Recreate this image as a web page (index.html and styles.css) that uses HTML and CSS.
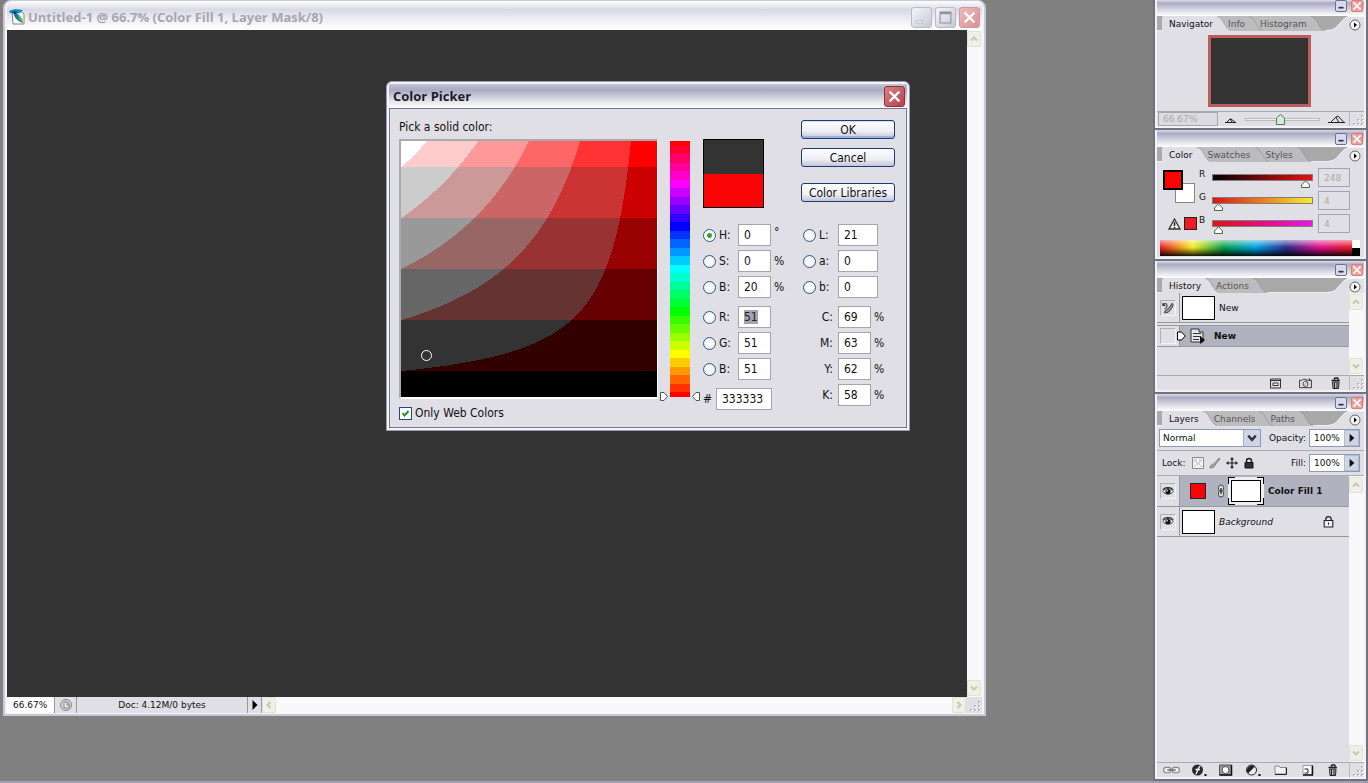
FILE: index.html
```html
<!DOCTYPE html>
<html lang="en">
<head>
<meta charset="utf-8">
<title>Untitled-1</title>
<link rel="stylesheet" href="styles.css">
</head>
<body>
<svg class="defs" aria-hidden="true">
  <symbol id="min" viewBox="0 0 12 12"><path d="M3 7h6v2H3z" fill="currentColor"/></symbol>
  <symbol id="x" viewBox="0 0 12 12"><path d="M1.500 1.500l9 9M10.500 1.500l-9 9" stroke="#fff" stroke-width="2"/></symbol>
  <symbol id="max" viewBox="0 0 12 12"><path d="M1 1h10v10H1z" fill="none" stroke="#90909c"/><path d="M1 2h10" stroke="#90909c" stroke-width="2"/></symbol>
  <symbol id="up" viewBox="0 0 10 10"><path d="M2 6.500l3-3 3 3" fill="none" stroke="#c5c7b8" stroke-width="2"/></symbol>
  <symbol id="down" viewBox="0 0 10 10"><path d="M2 3.500l3 3 3-3" fill="none" stroke="#c5c7b8" stroke-width="2"/></symbol>
  <symbol id="tail" viewBox="0 0 20 15"><path d="M0 0H4C11 1 11 14 20 15H0Z" fill="currentColor"/><path d="M4 .5C11 1 11 13 18 14.500" fill="none" stroke="#777" stroke-opacity=".45"/></symbol>
  <symbol id="fly" viewBox="0 0 36 15"><path d="M0 15C12 14 12 1 22 0H36V15Z" fill="#e0dfe5"/><path d="M0 14.500C12 14 12 1 22 .5H36" fill="none" stroke="#f6f6f8"/><circle cx="27" cy="9" r="5" fill="#f4f4f6" stroke="#666"/><path d="M26 6.500v5l3-2.500z" fill="#000"/></symbol>
  <symbol id="grip" viewBox="0 0 14 14"><path d="M11 3h2v2h-2zM7 7h2v2H7zM11 7h2v2h-2zM3 11h2v2H3zM7 11h2v2H7zM11 11h2v2h-2z" fill="#b3b1b8"/><path d="M12 4h2v1h-2zM8 8h2v1H8zM12 8h2v1h-2zM4 12h2v1H4zM8 12h2v1H8zM12 12h2v1h-2z" fill="#fff"/></symbol>
  <symbol id="trash" viewBox="0 0 12 12"><path d="M2 3.500h8.500M4.500 2.500L5.500 1H8l1 1.500" fill="none" stroke="#222" stroke-width="1.500"/><path d="M3 5h6.500L9 11.500H3.500z" fill="#bbb" stroke="#222"/><path d="M5 5.500v5.500M7.500 5.500v5.500" stroke="#222"/></symbol>
  <symbol id="eye" viewBox="0 0 16 14"><path d="M2 7C5 2.500 11 2.500 14 7C11 11 5 11 2 7Z" fill="#fff" stroke="#222"/><circle cx="8" cy="7" r="3" fill="#111"/><circle cx="7" cy="6" r="1" fill="#ccc"/><path d="M2 5C5 1.500 11 1.500 14 5" fill="none" stroke="#222" stroke-width="1.300"/></symbol>
  <symbol id="rarr" viewBox="0 0 10 10"><path d="M3 1.500l4 3.500-4 3.500z" fill="#111"/></symbol>
</svg>

<div class="desktop">
  <main class="doc">
    <header class="doc-title">
      <svg class="app-icon" viewBox="0 0 16 16"><path d="M3 2h9l3 3v10H4z" fill="#f5f8f8" stroke="#888"/><path d="M0 2L6 0l8 1-3 3-5 1-5-1z" fill="#1889bd"/><path d="M4 3c4 0 7 4 10 11-6-2-9-6-10-11z" fill="#1c76a8"/><path d="M9 5c3 2 5 5 5 9-3-2-5-5-5-9z" fill="#6bb54a"/><path d="M3 2l5 1-2 2z" fill="#0a2f4d"/></svg>
      <h1>Untitled-1 @ 66.7% (Color Fill 1, Layer Mask/8)</h1>
      <button class="wbtn" aria-label="Minimize"><svg viewBox="0 0 12 12"><path d="M1 9h6v2H1z" fill="#fff" stroke="#a0a0aa" stroke-width=".6"/></svg></button>
      <button class="wbtn" aria-label="Maximize"><svg><use href="#max"/></svg></button>
      <button class="wbtn wclose pale" aria-label="Close"><svg><use href="#x"/></svg></button>
    </header>
    <div class="doc-view">
      <div class="artboard"></div>
      <div class="vscroll"><button aria-label="Scroll up"><svg><use href="#up"/></svg></button><button aria-label="Scroll down"><svg><use href="#down"/></svg></button></div>
    </div>
    <footer class="doc-status">
      <input class="doc-zoom" aria-label="Zoom" value="66.67%">
      <span class="status-icon"><svg viewBox="0 0 14 14"><circle cx="7" cy="7" r="5.500" fill="#d0d0d4" stroke="#888"/><path d="M5 4v6h5V6L8 4z" fill="#e8e8ea" stroke="#888"/><path d="M8 4v3h3" fill="none" stroke="#888"/></svg></span>
      <span class="doc-info">Doc: 4.12M/0 bytes</span>
      <button class="doc-more" aria-label="Status menu"><svg viewBox="0 0 10 10"><path d="M2.500 0v10l5-5z" fill="#000"/></svg></button>
      <div class="hscroll"><button aria-label="Scroll left"><svg class="rot-r"><use href="#down"/></svg></button><button aria-label="Scroll right"><svg class="rot-l"><use href="#down"/></svg></button></div>
      <svg class="grip"><use href="#grip"/></svg>
    </footer>
  </main>

  <aside class="dock">
    <section class="palette nav">
      <div class="bar bar-short"><button class="pmin" aria-label="Minimize"><svg><use href="#min"/></svg></button><button class="pclose" aria-label="Close"><svg><use href="#x"/></svg></button></div>
      <div class="tabs"><button class="tab on">Navigator<svg><use href="#tail"/></svg></button><button class="tab">Info<svg><use href="#tail"/></svg></button><button class="tab">Histogram<svg><use href="#tail"/></svg></button><button class="fly" aria-label="Palette menu"><svg><use href="#fly"/></svg></button></div>
      <div class="nav-body"><div class="thumb"></div></div>
      <div class="nav-foot">
        <input class="nav-zoom" aria-label="Zoom" value="66.67%">
        <svg class="hill-s" viewBox="0 0 12 8"><path d="M0 7.500H11M2 7L5 4l2 3M5 4l1 0 4 3" fill="none" stroke="#222"/></svg>
        <input type="range" class="zoomer" aria-label="Zoom slider" min="0" max="100" value="47">
        <svg class="hill-l" viewBox="0 0 18 8"><path d="M0 7.500H17M3 7l5-5 2.500 5M8 2l2-1 5.500 6" fill="none" stroke="#222"/></svg>
        <svg class="grip edge"><use href="#grip"/></svg>
      </div>
    </section>

    <section class="palette color">
      <div class="bar"><button class="pmin" aria-label="Minimize"><svg><use href="#min"/></svg></button><button class="pclose" aria-label="Close"><svg><use href="#x"/></svg></button></div>
      <div class="tabs"><button class="tab on">Color<svg><use href="#tail"/></svg></button><button class="tab">Swatches<svg><use href="#tail"/></svg></button><button class="tab">Styles<svg><use href="#tail"/></svg></button><button class="fly" aria-label="Palette menu"><svg><use href="#fly"/></svg></button></div>
      <div class="color-body">
        <div class="chips">
          <div class="fgbg"><button class="bgc" aria-label="Background color"></button><button class="fgc" aria-label="Foreground color"></button></div>
          <div class="gamut"><svg viewBox="0 0 13 12"><path d="M6.500 1L12 11H1z" fill="#f2f2f2" stroke="#333" stroke-width="1.300"/><path d="M6.500 4v4M6.500 9v1.300" stroke="#222" stroke-width="1.500"/></svg><button class="safe" aria-label="Printable color"></button></div>
        </div>
        <div class="channels">
          <label for="cr">R</label><input type="range" id="cr" class="ch ch-r" max="255" value="248"><input class="dim" aria-label="Red value" value="248">
          <label for="cg">G</label><input type="range" id="cg" class="ch ch-g" max="255" value="4"><input class="dim" aria-label="Green value" value="4">
          <label for="cb">B</label><input type="range" id="cb" class="ch ch-b" max="255" value="4"><input class="dim" aria-label="Blue value" value="4">
        </div>
      </div>
      <div class="spectrum"><div class="ramp"></div><div class="bw"></div></div>
    </section>

    <section class="palette history">
      <div class="bar"><button class="pmin" aria-label="Minimize"><svg><use href="#min"/></svg></button><button class="pclose" aria-label="Close"><svg><use href="#x"/></svg></button></div>
      <div class="tabs"><button class="tab on">History<svg><use href="#tail"/></svg></button><button class="tab">Actions<svg><use href="#tail"/></svg></button><button class="fly" aria-label="Palette menu"><svg><use href="#fly"/></svg></button></div>
      <div class="split">
        <div class="list">
          <div class="snap"><span class="gut"><span class="cell"><svg viewBox="0 0 14 14"><path d="M1.500 4.500C3 2 6 2 6 5S3 8 4 9" fill="none" stroke="#444" stroke-width="1.200"/><path d="M1 1.500v4h4z" fill="#333"/><path d="M3 12.500c1-3 3-3 4-4l4.500-6c1.500 1 1 3-1 6-2 3-4.500 5-7.500 4z" fill="#999" stroke="#333"/></svg></span></span><span class="pic"></span><span>New</span></div>
          <div class="state"><span class="gut"><span class="cell"></span></span><svg class="ptr" viewBox="0 0 9 10"><path d="M.5 1h4L8.300 5 4.500 9h-4z" fill="#fff" stroke="#000"/></svg><svg class="docico" viewBox="0 0 16 16"><path d="M2 1h8v3h4v10H2z" fill="#e6e6ea" stroke="#333"/><path d="M4 5.500h8M4 8.500h8M4 11.500h6" stroke="#333"/><path d="M11 8l5 4-5 4z" fill="#111"/></svg><b>New</b></div>
        </div>
        <div class="vscroll small"><button aria-label="Scroll up"><svg><use href="#up"/></svg></button><button aria-label="Scroll down"><svg><use href="#down"/></svg></button></div>
      </div>
      <div class="foot hist-foot">
        <button aria-label="New document"><svg viewBox="0 0 12 12"><path d="M1 2h10v9H1z" fill="#ddd" stroke="#333"/><path d="M1 3.500h10" stroke="#333"/><path d="M3.500 6h5v2.500h-5z" fill="#fff" stroke="#333"/></svg></button>
        <button aria-label="New snapshot"><svg viewBox="0 0 14 12"><path d="M.5 3h3l1-1h3v1h6v8H.5z" fill="#ddd" stroke="#333"/><circle cx="7" cy="7" r="2.700" fill="#fff" stroke="#333"/><path d="M6 8l2-2M11 1l1 3" stroke="#222"/></svg></button>
        <button aria-label="Delete"><svg><use href="#trash"/></svg></button>
        <svg class="grip edge"><use href="#grip"/></svg>
      </div>
    </section>

    <section class="palette layers">
      <div class="bar"><button class="pmin" aria-label="Minimize"><svg><use href="#min"/></svg></button><button class="pclose" aria-label="Close"><svg><use href="#x"/></svg></button></div>
      <div class="tabs"><button class="tab on">Layers<svg><use href="#tail"/></svg></button><button class="tab">Channels<svg><use href="#tail"/></svg></button><button class="tab">Paths<svg><use href="#tail"/></svg></button><button class="fly" aria-label="Palette menu"><svg><use href="#fly"/></svg></button></div>
      <div class="opts">
        <span class="blend"><select aria-label="Blend mode"><option>Normal</option></select><svg viewBox="0 0 17 16"><path d="M4.500 5.500l4 4.500 4-4.500" fill="none" stroke="#333" stroke-width="2.500"/></svg></span>
        <label for="op" class="push">Opacity:</label><span class="pct"><input id="op" value="100%"><button aria-label="Opacity slider"><svg><use href="#rarr"/></svg></button></span>
      </div>
      <div class="opts">
        <span class="lock">Lock:</span>
        <button aria-label="Lock transparency"><svg viewBox="0 0 12 12"><path d="M.5.5h11v11H.5z" fill="#f4f4f6" stroke="#888"/><path d="M2 2h3v3H2zM7 2h3v3H7zM4 5h4v3H4zM2 8h2v2H2zM8 8h2v2H8z" fill="#d4d4d8"/></svg></button>
        <button aria-label="Lock pixels"><svg viewBox="0 0 12 12"><path d="M1 11c0-3 2-4 4-4l5-6 1 1-5 6c0 2-2 3-5 3z" fill="#aaa" stroke="#666" stroke-width=".7"/></svg></button>
        <button aria-label="Lock position"><svg viewBox="0 0 12 12"><path d="M6 1v10M1 6h10" stroke="#222" stroke-width="1.200"/><path d="M6 0l2 2.500H4zM6 12l2-2.500H4zM0 6l2.500-2v4zM12 6L9.500 4v4z" fill="#222"/></svg></button>
        <button aria-label="Lock all"><svg viewBox="0 0 12 12"><path d="M3.500 6V4a2.500 2.500 0 0 1 5 0v2" fill="none" stroke="#222" stroke-width="1.500"/><path d="M2 5.500h8V11H2z" fill="#333" stroke="#111"/></svg></button>
        <label for="fl" class="push">Fill:</label><span class="pct"><input id="fl" value="100%"><button aria-label="Fill slider"><svg><use href="#rarr"/></svg></button></span>
      </div>
      <div class="split grow">
        <div class="list">
          <div class="layer sel"><span class="gut"><button class="cell" aria-label="Visibility"><svg><use href="#eye"/></svg></button></span><span class="fill-thumb"></span><svg class="link" viewBox="0 0 8 14"><rect x="1.500" y="1" width="5" height="6.500" rx="2.500" fill="#ddd" stroke="#444"/><rect x="1.500" y="6.500" width="5" height="6.500" rx="2.500" fill="#ddd" stroke="#444"/><path d="M4 4v6" stroke="#222" stroke-width="1.300"/></svg><span class="mask"><span></span></span><b>Color Fill 1</b></div>
          <div class="layer"><span class="gut"><button class="cell" aria-label="Visibility"><svg><use href="#eye"/></svg></button></span><span class="pic"></span><i>Background</i><svg class="padlock" viewBox="0 0 12 12"><path d="M3.500 5V4a2.500 2.500 0 0 1 5 0v1" fill="none" stroke="#222" stroke-width="1.200"/><path d="M2 5h8v6H2z" fill="#eee" stroke="#222"/><path d="M6 7v2" stroke="#222"/></svg></div>
        </div>
        <div class="vscroll small"><button aria-label="Scroll up"><svg><use href="#up"/></svg></button><button aria-label="Scroll down"><svg><use href="#down"/></svg></button></div>
      </div>
      <div class="foot lay-foot">
        <button aria-label="Link layers"><svg viewBox="0 0 16 12"><rect x=".5" y="3.500" width="7" height="5" rx="2.500" fill="#eee" stroke="#888"/><rect x="8.500" y="3.500" width="7" height="5" rx="2.500" fill="#eee" stroke="#888"/><path d="M4 6h8" stroke="#777" stroke-width="1.500"/></svg></button>
        <button aria-label="Layer style"><svg viewBox="0 0 16 14"><circle cx="7" cy="7" r="5.500" fill="#2a2a2a"/><path d="M5 11c2 0 2-7 5-8M5 6.500h4.500" fill="none" stroke="#fff" stroke-width="1.300"/><path d="M14 11h2v2h-2z" fill="#000"/></svg></button>
        <button aria-label="Add mask"><svg viewBox="0 0 16 14"><path d="M2 2h12v10H2z" fill="#999" stroke="#555"/><path d="M14 2v10H2" fill="none" stroke="#111" stroke-width="1.500"/><circle cx="8" cy="7" r="3.500" fill="#fff" stroke="#555"/></svg></button>
        <button aria-label="Adjustment layer"><svg viewBox="0 0 16 14"><circle cx="7" cy="7" r="5" fill="#eee" stroke="#222"/><path d="M3.500 10.500A5 5 0 0 1 10.500 3.500z" fill="#222"/><path d="M14 11h2v2h-2z" fill="#000"/></svg></button>
        <button aria-label="New group"><svg viewBox="0 0 16 14"><path d="M2.500 3h4l1 1.500h6V11h-11z" fill="#f2f2f4" stroke="#888"/><path d="M14 4.500v7H2.500" fill="none" stroke="#222"/></svg></button>
        <button aria-label="New layer"><svg viewBox="0 0 16 14"><path d="M3.500 2.500h9v9h-9z" fill="#fff" stroke="#999"/><path d="M13 2.500v9.500H3.500" fill="none" stroke="#111" stroke-width="1.500"/><path d="M5 6h3.500v4H5" fill="none" stroke="#222"/></svg></button>
        <button aria-label="Delete layer"><svg class="bin"><use href="#trash"/></svg></button>
        <svg class="grip edge"><use href="#grip"/></svg>
      </div>
    </section>
  </aside>

  <section class="dialog" role="dialog" aria-labelledby="dt">
    <header class="dlg-title"><h2 id="dt">Color Picker</h2><button class="wbtn wclose" aria-label="Close"><svg><use href="#x"/></svg></button></header>
    <form class="dlg-body">
      <div class="pick">
        <p>Pick a solid color:</p>
        <div class="field"><canvas id="sb" width="256" height="256"></canvas><span class="cursor"></span></div>
        <label class="web"><input type="checkbox" checked>Only Web Colors</label>
      </div>
      <div class="hue"><svg viewBox="0 0 8 9"><path d="M.5.5h3.500L7.500 4.500 4 8.500H.5z" fill="#fff" stroke="#555"/></svg><canvas id="hb" width="20" height="256"></canvas><svg viewBox="0 0 8 9"><path d="M7.500.5H4L.5 4.500 4 8.500h3.500z" fill="#fff" stroke="#555"/></svg></div>
      <div class="values">
        <div class="top">
          <div class="compare"><span class="new"></span><span class="old"></span></div>
          <div class="btns"><button type="button" class="xp def">OK</button><button type="button" class="xp">Cancel</button><button type="button" class="xp lib">Color Libraries</button></div>
        </div>
        <div class="cols">
          <div class="set">
            <div class="row"><input type="radio" name="m" id="mh" checked><label for="mh">H:</label><input aria-label="Hue" value="0"><span class="deg">°</span></div>
            <div class="row"><input type="radio" name="m" id="ms"><label for="ms">S:</label><input aria-label="Saturation" value="0"><span>%</span></div>
            <div class="row"><input type="radio" name="m" id="mb"><label for="mb">B:</label><input aria-label="Brightness" value="20"><span>%</span></div>
            <div class="row brk"><input type="radio" name="m" id="mr"><label for="mr">R:</label><input aria-label="Red" id="vr" value="51"></div>
            <div class="row"><input type="radio" name="m" id="mg"><label for="mg">G:</label><input aria-label="Green" value="51"></div>
            <div class="row"><input type="radio" name="m" id="mbl"><label for="mbl">B:</label><input aria-label="Blue" value="51"></div>
            <div class="hex"><label for="hx">#</label><input id="hx" value="333333"></div>
          </div>
          <div class="set">
            <div class="row lab"><input type="radio" name="m" id="ml"><label for="ml">L:</label><input aria-label="Lightness" value="21"></div>
            <div class="row lab"><input type="radio" name="m" id="ma"><label for="ma">a:</label><input aria-label="a axis" value="0"></div>
            <div class="row lab"><input type="radio" name="m" id="mbb"><label for="mbb">b:</label><input aria-label="b axis" value="0"></div>
            <div class="row cmyk brk"><label for="c1">C:</label><input id="c1" value="69"><span>%</span></div>
            <div class="row cmyk"><label for="c2">M:</label><input id="c2" value="63"><span>%</span></div>
            <div class="row cmyk"><label for="c3">Y:</label><input id="c3" value="62"><span>%</span></div>
            <div class="row cmyk"><label for="c4">K:</label><input id="c4" value="58"><span>%</span></div>
          </div>
        </div>
      </div>
    </form>
  </section>
</div>
<script src="picker.js"></script>
</body>
</html>
```
FILE: styles.css
```css
* { box-sizing: border-box; }
body { margin: 0; background: #808080; font: 9px/12px "DejaVu Sans", sans-serif; color: #111; }
button, input, select { font: inherit; color: inherit; margin: 0; padding: 0; }
button { border: 0; background: none; display: flex; align-items: center; justify-content: center; }
input { border: 1px solid #a5a5b0; background: #fff; min-width: 0; border-radius: 0; outline: 0; }
h1, h2, p { margin: 0; }
svg { display: block; flex: none; }
.defs { position: absolute; width: 0; height: 0; }
.desktop { display: flex; align-items: flex-start; min-height: 100vh; overflow: hidden; position: relative; border-bottom: 2px solid #a0a0ac; }

/* document window */
.doc { flex: 1; display: flex; flex-direction: column; height: calc(100vh - 67px); margin: 0 167px 0 3px; border: 2px solid #c9c9d3; border-top: 1px solid #c9c9d3; border-radius: 8px 8px 0 0; background: #f3f3f8; padding: 0 2px 1px; min-width: 0; }
.doc-title { height: 29px; display: flex; align-items: center; gap: 3px; padding: 3px 2px 0 2px; background: linear-gradient(#fdfdfe, #d9d9e6 30%, #f2f2f6 70%, #fff); border-radius: 6px 6px 0 0; }
.app-icon { width: 16px; height: 16px; }
h1, h2 { font: 700 13px/18px "Open Sans", sans-serif; }
h1 { flex: 1; color: #a6a6ae; white-space: nowrap; overflow: hidden; }
.wbtn { width: 21px; height: 21px; border: 1px solid #b9b9c6; border-radius: 3px; background: linear-gradient(135deg, #f4f4f8, #c9c9d6); flex: none; }
.wbtn svg { width: 13px; height: 13px; }
.wclose { background: linear-gradient(135deg, #dc8084, #b8424c); border-color: #8d3038; }
.wclose.pale { background: linear-gradient(135deg, #efb9bb, #dc9096); border-color: #c99aa2; }
.doc-view { flex: 1; display: flex; min-height: 0; }
.artboard { flex: 1; background: #333; }
.vscroll { width: 15px; background: #f9f9fb; display: flex; flex-direction: column; justify-content: space-between; padding: 1px 0; }
.vscroll button, .hscroll button { width: 14px; height: 16px; background: #eff0e6; border: 1px solid #e0e1d6; border-radius: 2px; }
.vscroll svg, .hscroll svg { width: 10px; height: 10px; }
.rot-r { transform: rotate(90deg); }
.rot-l { transform: rotate(-90deg); }
.doc-status { height: 16px; display: flex; background: #e0dfe5; }
.doc-zoom { width: 48px; border: 0; border-right: 1px solid #999; padding-left: 6px; }
.status-icon { width: 22px; display: flex; align-items: center; justify-content: center; border-right: 1px solid #999; }
.status-icon svg { width: 14px; height: 14px; }
.doc-info { width: 170px; text-align: center; line-height: 16px; }
.doc-more { width: 15px; border: solid #999; border-width: 0 1px; }
.doc-more svg { width: 10px; height: 10px; }
.hscroll { flex: 1; display: flex; justify-content: space-between; background: #f9f9fb; }
.grip { width: 14px; height: 14px; margin: 1px; }

/* palettes */
.dock { width: 215px; height: calc(100vh - 2px); display: flex; flex-direction: column; gap: 2px; padding: 0 2px 2px 2px; background: #71717f; }
.palette { background: #e0dfe5; border: solid #f1f1f6; border-width: 0 2px 2px; display: flex; flex-direction: column; }
.bar { height: 17px; flex: none; display: flex; justify-content: flex-end; align-items: center; gap: 4px; padding-right: 1px; background: linear-gradient(#dcdce8, #abacc4 20%, #d6d6e2 60%, #fff); }
.bar-short { height: 16px; align-items: flex-start; }
.pmin, .pclose { width: 12px; height: 12px; border: 1px solid #6d7190; border-radius: 2px; background: #d9dbea; }
.pclose { background: #e8a09c; border-color: #e27a75; }
.pmin svg, .pclose svg { width: 10px; height: 10px; }
.pmin { color: #222b55; }
.tabs { height: 15px; flex: none; display: flex; padding-left: 5px; background: #a9a9a9; isolation: isolate; border-bottom: 1px solid #efeff2; }
.tab { position: relative; background: #bcbcbe; color: #555; padding-left: 15px; height: 15px; z-index: 2; }
.tab + .tab { z-index: 1; }
.tab + .tab + .tab { z-index: 0; }
.tab.on { background: #e0dfe5; color: #111; padding-left: 7px; z-index: 3; border-radius: 2px 0 0 0; }
.tab > svg { position: absolute; left: 100%; top: 0; width: 20px; height: 15px; color: #bcbcbe; }
.tab.on > svg { color: #e0dfe5; }
.fly { margin-left: auto; }
.fly svg { width: 36px; height: 15px; }

.nav-body { height: 80px; display: flex; justify-content: center; align-items: flex-start; padding: 4px 2px 0 0; }
.thumb { width: 103px; height: 72px; background: #333; border: 3px solid #bd5d5e; }
.nav-foot { height: 15px; display: flex; align-items: center; border-top: 1px solid #aaa; padding-left: 1px; }
.nav-zoom { width: 60px; height: 14px; background: #dcdbe0; color: #aaa; padding-left: 4px; }
.hill-s { width: 12px; height: 8px; margin-left: 7px; }
.hill-l { width: 18px; height: 8px; margin-left: 8px; }
.edge { margin: 0 0 0 auto; border-left: 1px solid #bbb; width: 15px; }
input[type=range] { appearance: none; background: none; border: 0; display: block; }
.zoomer { width: 75px; height: 14px; margin-left: 8px; }
.zoomer::-webkit-slider-runnable-track { height: 3px; border: 1px solid #bbb; background: #eee; }
.zoomer::-webkit-slider-thumb { appearance: none; width: 9px; height: 11px; margin-top: -5px; background: url("data:image/svg+xml,%3Csvg xmlns='http://www.w3.org/2000/svg' viewBox='0 0 9 11'%3E%3Cpath d='M.5 4L4.500.5 8.500 4v6.500h-8z' fill='%23d3ecd3' stroke='%23587a62'/%3E%3C/svg%3E"); }

.color-body { display: flex; height: 77px; padding: 5px 14px 0 5px; }
.chips { width: 37px; display: flex; flex-direction: column; gap: 15px; padding-top: 3px; }
.fgbg { position: relative; height: 32px; }
.fgc { position: absolute; left: 1px; top: 0; width: 20px; height: 20px; background: #f80404; border: 2px solid #000; }
.bgc { position: absolute; left: 13px; top: 13px; width: 20px; height: 20px; background: #fff; border: 1px solid #888; }
.gamut { display: flex; gap: 3px; padding-left: 6px; align-items: center; }
.gamut svg { width: 13px; height: 12px; }
.safe { width: 13px; height: 13px; background: #ee1c24; border: 1px solid #222; }
.channels { flex: 1; display: grid; grid-template-columns: 13px 1fr 32px; grid-auto-rows: 19px; row-gap: 4px; align-items: start; padding-top: 1px; }
.ch { width: calc(100% - 5px); height: 16px; padding-top: 2px; }
.ch::-webkit-slider-runnable-track { height: 7px; border: 1px solid #8a7a7a; background: var(--ramp); }
.ch-r { --ramp: linear-gradient(90deg, #000404, #d01010 90%, #e01414); }
.ch-g { --ramp: linear-gradient(90deg, #d81818, #e88020 50%, #f0f030); }
.ch-b { --ramp: linear-gradient(90deg, #d81818, #e01080 50%, #e818e8); }
.ch::-webkit-slider-thumb { appearance: none; width: 9px; height: 8px; margin-top: 5px; background: url("data:image/svg+xml,%3Csvg xmlns='http://www.w3.org/2000/svg' viewBox='0 0 9 8'%3E%3Cpath d='M.5 5L4.500.7 8.500 5v2.500h-8z' fill='%23fff' stroke='%23476a50'/%3E%3C/svg%3E"); }
.dim { height: 19px; background: #e0dfe5; color: #aaa; padding-left: 5px; width: 32px; }
.spectrum { display: flex; height: 16px; margin: 1px 4px 1px 3px; }
.ramp { flex: 1; background: linear-gradient(rgba(255,255,255,.6), transparent 45%, rgba(0,0,0,.05) 50%, rgba(0,0,0,.9)), linear-gradient(90deg, #e81c24, #f7ec20 17%, #08a04c 33%, #00a4e4 50%, #2c2c90 66%, #e0108c 83%, #e81c24); }
.bw { width: 8px; background: linear-gradient(#fff 50%, #000 50%); }

.split { display: flex; }
.grow { flex: 1; }
.list { flex: 1; }
.gut { width: 23px; align-self: stretch; display: flex; align-items: center; justify-content: center; background: #e0dfe5; border-right: 1px solid #999; flex: none; }
.cell { width: 16px; height: 16px; border: 1px solid #b0b0b6; border-right-color: #f4f4f6; border-bottom-color: #f4f4f6; display: flex; align-items: center; justify-content: center; }
.cell svg { width: 14px; height: 13px; }
.pic { width: 33px; height: 24px; border: 1px solid #000; background: #fff; margin: 0 4px 0 2px; flex: none; }
.history .split { height: 82px; }
.snap { display: flex; align-items: center; height: 30px; border-bottom: 1px solid #999; }
.state { display: flex; align-items: center; height: 22px; margin-top: 2px; background: #b0b3bf; border: solid #999; border-width: 1px 0; position: relative; }
.ptr { position: absolute; left: 20px; width: 9px; height: 10px; }
.docico { width: 16px; height: 16px; margin: 0 9px 0 9px; }
.foot { height: 15px; flex: none; display: flex; align-items: center; border-top: 1px solid #aaa; }
.hist-foot { justify-content: flex-end; gap: 17px; }
.hist-foot .edge { margin-left: -10px; }
.foot button svg { width: 13px; height: 12px; }
.palette .foot .edge { width: 15px; height: 14px; }

.layers { flex: 1; min-height: 0; }
.opts { height: 25px; flex: none; display: flex; align-items: center; padding: 0 4px 0 2px; border-bottom: 1px solid #aaa; gap: 5px; }
.opts button svg { width: 12px; height: 12px; }
.blend { position: relative; width: 102px; height: 18px; }
.blend select { appearance: none; width: 100%; height: 18px; border: 1px solid #8c9ab4; background: #fff; padding-left: 3px; border-radius: 0; }
.blend svg { position: absolute; right: 1px; top: 1px; width: 17px; height: 16px; background: #cfd5e8; border-left: 1px solid #a8b0c8; pointer-events: none; }
.pct { display: flex; width: 51px; height: 18px; border: 1px solid #8c9ab4; background: #fff; margin-left: -2px; }
.pct input { flex: 1; border: 0; padding-left: 4px; width: 34px; }
.pct button { width: 15px; background: #cfd5e8; border: 1px solid #b4bcd0; }
.lock { margin: 0 1px 0 3px; }
.push { margin-left: auto; }
.layer { display: flex; align-items: center; height: 30px; border-bottom: 1px solid #999; }
.layer i { flex: 1; }
.layer.sel { height: 31px; background: #b0b3bf; }
.fill-thumb { width: 16px; height: 16px; background: #f80404; border: 1px solid #222; margin: 0 11px 0 10px; }
.link { width: 8px; height: 14px; }
.mask { padding: 3px; margin: 0 4px 0 3px; background:
  linear-gradient(#eceef2, #eceef2) center / calc(100% - 2px) calc(100% - 2px) no-repeat,
  linear-gradient(#eceef2, #eceef2) center / 22px 100% no-repeat,
  linear-gradient(#eceef2, #eceef2) center / 100% 14px no-repeat, #000; }
.mask span { display: block; width: 30px; height: 22px; border: 1px solid #000; background: #fff; }
.padlock { width: 13px; height: 13px; margin-right: 14px; }
.lay-foot { justify-content: space-between; padding-left: 6px; }
.lay-foot .edge { margin: 0; }
.lay-foot button svg { width: 17px; height: 14px; }
.lay-foot button .bin { width: 13px; height: 12px; }

/* colour picker dialog */
.dialog { position: absolute; left: 386px; top: 81px; width: 524px; background: #f3f3f8; border-radius: 6px 6px 0 0; padding: 2px; border: 1px solid #9b9bb2; font: 12px/16px "DejaVu Sans Condensed", "DejaVu Sans", sans-serif; }
.dlg-title { display: flex; align-items: center; justify-content: space-between; height: 24px; padding: 0 2px 0 4px; background: linear-gradient(#c4c4d6, #a9a9c2 25%, #dcdce6 65%, #fff); }
.dlg-title h2 { color: #1c1c28; }
.dlg-body { display: flex; background: #e0dfe5; border: 1px solid #77778c; padding: 10px 11px 6px 9px; }
.pick { display: flex; flex-direction: column; }
.pick p { height: 20px; }
.field { position: relative; border: 1px solid #aaa; border-width: 2px 0 0 2px; border-right: 1px solid #fff; border-bottom: 2px solid #fff; }
canvas { display: block; }
.cursor { position: absolute; left: 20px; top: 209px; width: 11px; height: 11px; border: 1px solid #fff; border-radius: 50%; }
.web { display: flex; align-items: center; gap: 3px; height: 16px; margin-top: 6px; }
.web input { appearance: none; width: 13px; height: 13px; border: 1px solid #234a7c; background: #fff url("data:image/svg+xml,%3Csvg xmlns='http://www.w3.org/2000/svg' viewBox='0 0 11 11'%3E%3Cpath d='M2.500 5l2 2.500L8.500 3' fill='none' stroke='%232c8a2c' stroke-width='2'/%3E%3C/svg%3E"); }
.hue { display: flex; align-items: flex-end; align-self: flex-start; gap: 2px; padding: 22px 2px 0 2px; }
.hue svg { width: 8px; height: 9px; margin-bottom: -4px; }
.values { flex: 1; padding-left: 1px; }
.top { display: flex; justify-content: space-between; }
.compare { margin-top: 20px; width: 61px; height: 69px; border: 1px solid #000; display: flex; flex-direction: column; }
.compare span { flex: 1; }
.new { background: #333; }
.old { background: #f80404; }
.btns { display: flex; flex-direction: column; gap: 9px; width: 94px; padding-top: 1px; }
.xp { height: 19px; border: 1px solid #1d3c72; border-radius: 3px; background: linear-gradient(#fff, #eeeef4 60%, #c4c4d8); white-space: nowrap; }
.def { box-shadow: inset 0 -2px #9ab2e4, inset 0 1px #cddcf8; }
.lib { margin-top: 7px; }
.cols { display: grid; grid-template-columns: 100px 1fr; margin-top: 16px; }
.set { display: flex; flex-direction: column; gap: 4px; }
.row { display: grid; grid-template-columns: 13px 16px 33px auto; gap: 3px; justify-content: start; align-items: center; height: 22px; }
.row.lab { grid-template-columns: 13px 16px 40px; }
.row.cmyk { grid-template-columns: 32px 33px auto; }
.cmyk label { text-align: right; padding-right: 2px; }
.brk { margin-top: 4px; }
.row input, .hex input { height: 22px; padding-left: 5px; }
.row input[type=radio] { appearance: none; width: 13px; height: 13px; padding: 0; border: 1px solid #33567e; border-radius: 50%; background: radial-gradient(#fff, #e6ecec); }
.row input[type=radio]:checked { background: radial-gradient(circle, #2fa32f 2px, #fff 3px); }
.deg { align-self: start; }
.hex { display: flex; align-items: center; gap: 3px; margin-top: 4px; }
.hex label { width: 10px; }
.hex input { width: 56px; }
#vr::selection { background: #a2a4b0; color: #222; }
```
FILE: picker.js
```js
// Saturation/brightness field and hue strip, snapped to web-safe levels.
const snap = v => Math.round(v * 5) * 51;

const field = document.getElementById('sb').getContext('2d');
const img = field.createImageData(256, 256);
for (let y = 0; y < 256; y++) {
  for (let x = 0; x < 256; x++) {
    const v = 1 - y / 255, g = snap(v * (1 - x / 255));
    img.data.set([snap(v), g, g, 255], (y * 256 + x) * 4);
  }
}
field.putImageData(img, 0, 0);

const hue = document.getElementById('hb').getContext('2d');
for (let y = 0; y < 256; y++) {
  const h = (1 - y / 255) * 6;
  const ch = n => {
    const k = (n + h) % 6;
    return snap(1 - Math.max(0, Math.min(k, 4 - k, 1)));
  };
  hue.fillStyle = `rgb(${ch(5)},${ch(3)},${ch(1)})`;
  hue.fillRect(0, y, 20, 1);
}

const red = document.getElementById('vr');
red.focus();
red.select();
```
